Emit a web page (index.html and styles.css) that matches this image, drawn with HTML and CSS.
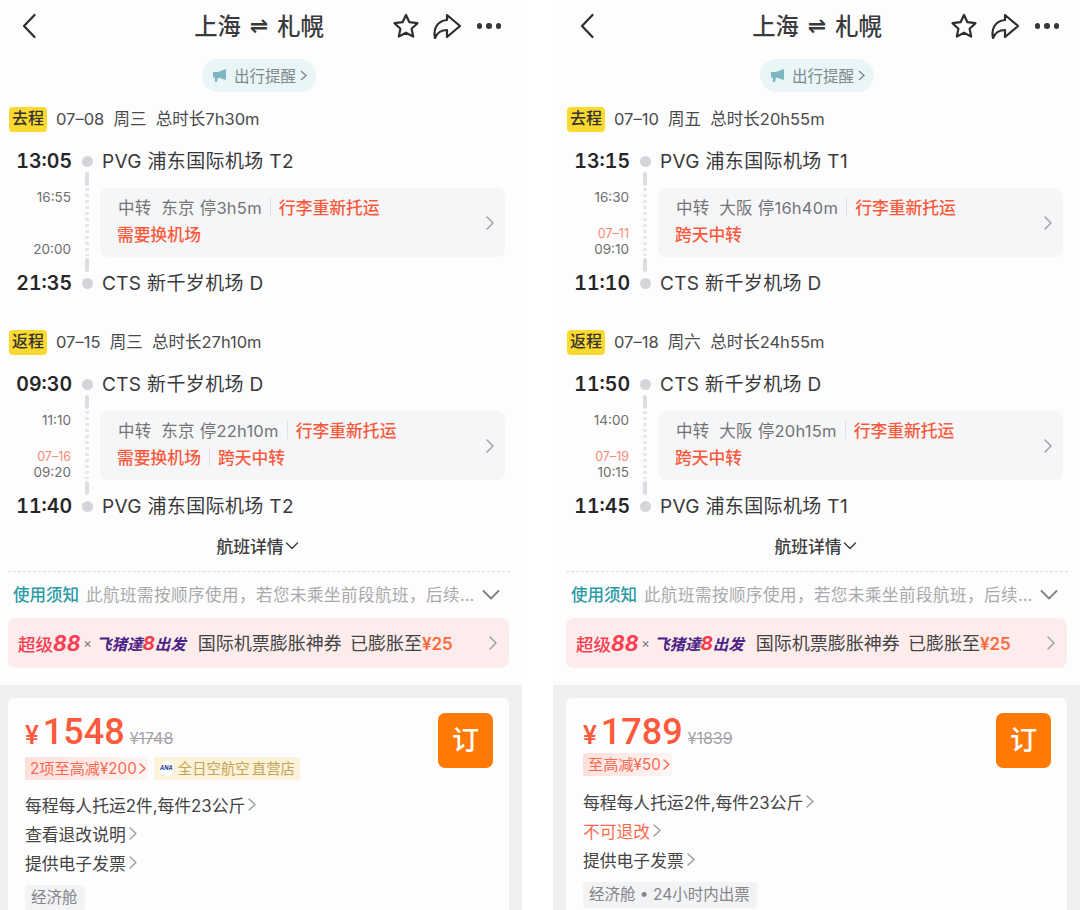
FILE: index.html
```html
<!DOCTYPE html>
<html lang="zh">
<head>
  <meta charset="UTF-8" />
  <title>上海 ⇌ 札幌</title>
  <link rel="stylesheet" href="styles.css">
</head>
<body>
  <div class="page">

    <!-- left phone -->
    <section class="phone phone-left">
      <header class="topbar">
        <svg class="back" width="14" height="26" viewBox="0 0 14 26"><path d="M12.5 2 L2 13 L12.5 24" /></svg>
        <h1 class="title">上海<span class="swap">⇌</span>札幌</h1>
        <div class="actions">
          <svg width="28" height="26" viewBox="0 0 28 26"><path d="M14 2 L17.4 9.2 L25.5 10.2 L19.6 15.7 L21.2 23.6 L14 19.7 L6.8 23.6 L8.4 15.7 L2.5 10.2 L10.6 9.2 Z" /></svg>
          <svg width="30" height="26" viewBox="0 0 30 26"><path d="M15 2 L28 13 L15 24 V17 C9 17 5 20 3 25 C1 16 5 8 15 7 Z" /></svg>
          <div class="dots"><i></i><i></i><i></i></div>
        </div>
      </header>
      <div class="notice-row">
        <div class="notice">
          <svg width="16" height="15" viewBox="0 0 16 15"><path class="horn" d="M1 4 L6 4 L14 1 V12 L6 9.5 L5 14 L3 14 L2.6 9.5 L1 9.5 Z" /></svg>
          <span>出行提醒</span><svg class="mini" width="7" height="11" viewBox="0 0 7 11"><path d="M1 1 L6 5.5 L1 10" /></svg>
        </div>
      </div>

      <div class="leg">
        <div class="leg-head"><span class="leg-tag">去程</span><span class="leg-info">07–08&nbsp; 周三&nbsp; 总时长7h30m</span></div>
        <div class="stop"><span class="time">13:05</span><i class="dot"></i><span class="airport">PVG 浦东国际机场 T2</span></div>
        <div class="transfer">
          <div class="times"><span>16:55</span><span>20:00</span></div>
          <div class="line"><i></i><em></em><i></i></div>
          <div class="box">
            <div class="box-text">
              <p><span class="grey">中转&nbsp; 东京 停3h5m</span><span class="sep"></span><span class="red">行李重新托运</span></p>
              <p><span class="red">需要换机场</span></p>
            </div>
            <svg class="chev" width="8" height="14" viewBox="0 0 8 14"><path d="M1 1 L7 7 L1 13" /></svg>
          </div>
        </div>
        <div class="stop"><span class="time">21:35</span><i class="dot"></i><span class="airport">CTS 新千岁机场 D</span></div>
      </div>

      <div class="leg">
        <div class="leg-head"><span class="leg-tag">返程</span><span class="leg-info">07–15&nbsp; 周三&nbsp; 总时长27h10m</span></div>
        <div class="stop"><span class="time">09:30</span><i class="dot"></i><span class="airport">CTS 新千岁机场 D</span></div>
        <div class="transfer">
          <div class="times"><span>11:10</span><span><small>07–16</small>09:20</span></div>
          <div class="line"><i></i><em></em><i></i></div>
          <div class="box">
            <div class="box-text">
              <p><span class="grey">中转&nbsp; 东京 停22h10m</span><span class="sep"></span><span class="red">行李重新托运</span></p>
              <p><span class="red">需要换机场</span><span class="sep"></span><span class="red">跨天中转</span></p>
            </div>
            <svg class="chev" width="8" height="14" viewBox="0 0 8 14"><path d="M1 1 L7 7 L1 13" /></svg>
          </div>
        </div>
        <div class="stop"><span class="time">11:40</span><i class="dot"></i><span class="airport">PVG 浦东国际机场 T2</span></div>
      </div>

      <div class="details">航班详情<svg width="14" height="8" viewBox="0 0 14 8"><path d="M1.5 1 L7 6.5 L12.5 1" /></svg></div>
      <div class="rules">
        <span class="rules-name">使用须知</span>
        <span class="rules-text">此航班需按顺序使用，若您未乘坐前段航班，后续…</span>
        <svg width="18" height="10" viewBox="0 0 18 10"><path d="M1.5 1 L9 8.5 L16.5 1" /></svg>
      </div>
      <div class="promo">
        <span class="promo-red">超级<b>88</b></span><span class="promo-x">×</span><span class="promo-purple">飞猪達<u>8</u>出发</span>
        <span class="promo-text">国际机票膨胀神券 已膨胀至<b>¥25</b></span>
        <svg class="chev" width="8" height="14" viewBox="0 0 8 14"><path d="M1 1 L7 7 L1 13" /></svg>
      </div>

      <div class="band">
        <div class="card">
          <div class="price-row"><span class="yen">¥</span><span class="price">1548</span><s class="old">¥1748</s></div>
          <div class="tags">
            <span class="tag-off">2项至高减¥200<svg width="7" height="11" viewBox="0 0 7 11"><path d="M1 1 L6 5.5 L1 10" /></svg></span>
            <span class="tag-shop"><i class="ana">ANA</i>全日空航空 直营店</span>
          </div>
          <ul class="terms">
            <li>每程每人托运2件,每件23公斤<svg width="8" height="13" viewBox="0 0 8 13"><path d="M1 1 L7 6.5 L1 12" /></svg></li>
            <li>查看退改说明<svg width="8" height="13" viewBox="0 0 8 13"><path d="M1 1 L7 6.5 L1 12" /></svg></li>
            <li>提供电子发票<svg width="8" height="13" viewBox="0 0 8 13"><path d="M1 1 L7 6.5 L1 12" /></svg></li>
          </ul>
          <span class="cabin">经济舱</span>
          <div class="book">订</div>
        </div>
      </div>
    </section>

    <!-- right phone -->
    <section class="phone phone-right">
      <header class="topbar">
        <svg class="back" width="14" height="26" viewBox="0 0 14 26"><path d="M12.5 2 L2 13 L12.5 24" /></svg>
        <h1 class="title">上海<span class="swap">⇌</span>札幌</h1>
        <div class="actions">
          <svg width="28" height="26" viewBox="0 0 28 26"><path d="M14 2 L17.4 9.2 L25.5 10.2 L19.6 15.7 L21.2 23.6 L14 19.7 L6.8 23.6 L8.4 15.7 L2.5 10.2 L10.6 9.2 Z" /></svg>
          <svg width="30" height="26" viewBox="0 0 30 26"><path d="M15 2 L28 13 L15 24 V17 C9 17 5 20 3 25 C1 16 5 8 15 7 Z" /></svg>
          <div class="dots"><i></i><i></i><i></i></div>
        </div>
      </header>
      <div class="notice-row">
        <div class="notice">
          <svg width="16" height="15" viewBox="0 0 16 15"><path class="horn" d="M1 4 L6 4 L14 1 V12 L6 9.5 L5 14 L3 14 L2.6 9.5 L1 9.5 Z" /></svg>
          <span>出行提醒</span><svg class="mini" width="7" height="11" viewBox="0 0 7 11"><path d="M1 1 L6 5.5 L1 10" /></svg>
        </div>
      </div>

      <div class="leg">
        <div class="leg-head"><span class="leg-tag">去程</span><span class="leg-info">07–10&nbsp; 周五&nbsp; 总时长20h55m</span></div>
        <div class="stop"><span class="time">13:15</span><i class="dot"></i><span class="airport">PVG 浦东国际机场 T1</span></div>
        <div class="transfer">
          <div class="times"><span>16:30</span><span><small>07–11</small>09:10</span></div>
          <div class="line"><i></i><em></em><i></i></div>
          <div class="box">
            <div class="box-text">
              <p><span class="grey">中转&nbsp; 大阪 停16h40m</span><span class="sep"></span><span class="red">行李重新托运</span></p>
              <p><span class="red">跨天中转</span></p>
            </div>
            <svg class="chev" width="8" height="14" viewBox="0 0 8 14"><path d="M1 1 L7 7 L1 13" /></svg>
          </div>
        </div>
        <div class="stop"><span class="time">11:10</span><i class="dot"></i><span class="airport">CTS 新千岁机场 D</span></div>
      </div>

      <div class="leg">
        <div class="leg-head"><span class="leg-tag">返程</span><span class="leg-info">07–18&nbsp; 周六&nbsp; 总时长24h55m</span></div>
        <div class="stop"><span class="time">11:50</span><i class="dot"></i><span class="airport">CTS 新千岁机场 D</span></div>
        <div class="transfer">
          <div class="times"><span>14:00</span><span><small>07–19</small>10:15</span></div>
          <div class="line"><i></i><em></em><i></i></div>
          <div class="box">
            <div class="box-text">
              <p><span class="grey">中转&nbsp; 大阪 停20h15m</span><span class="sep"></span><span class="red">行李重新托运</span></p>
              <p><span class="red">跨天中转</span></p>
            </div>
            <svg class="chev" width="8" height="14" viewBox="0 0 8 14"><path d="M1 1 L7 7 L1 13" /></svg>
          </div>
        </div>
        <div class="stop"><span class="time">11:45</span><i class="dot"></i><span class="airport">PVG 浦东国际机场 T1</span></div>
      </div>

      <div class="details">航班详情<svg width="14" height="8" viewBox="0 0 14 8"><path d="M1.5 1 L7 6.5 L12.5 1" /></svg></div>
      <div class="rules">
        <span class="rules-name">使用须知</span>
        <span class="rules-text">此航班需按顺序使用，若您未乘坐前段航班，后续…</span>
        <svg width="18" height="10" viewBox="0 0 18 10"><path d="M1.5 1 L9 8.5 L16.5 1" /></svg>
      </div>
      <div class="promo">
        <span class="promo-red">超级<b>88</b></span><span class="promo-x">×</span><span class="promo-purple">飞猪達<u>8</u>出发</span>
        <span class="promo-text">国际机票膨胀神券 已膨胀至<b>¥25</b></span>
        <svg class="chev" width="8" height="14" viewBox="0 0 8 14"><path d="M1 1 L7 7 L1 13" /></svg>
      </div>

      <div class="band">
        <div class="card card-short">
          <div class="price-row"><span class="yen">¥</span><span class="price">1789</span><s class="old">¥1839</s></div>
          <div class="tags">
            <span class="tag-off">至高减¥50<svg width="7" height="11" viewBox="0 0 7 11"><path d="M1 1 L6 5.5 L1 10" /></svg></span>
          </div>
          <ul class="terms">
            <li>每程每人托运2件,每件23公斤<svg width="8" height="13" viewBox="0 0 8 13"><path d="M1 1 L7 6.5 L1 12" /></svg></li>
            <li class="warn">不可退改<svg width="8" height="13" viewBox="0 0 8 13"><path d="M1 1 L7 6.5 L1 12" /></svg></li>
            <li>提供电子发票<svg width="8" height="13" viewBox="0 0 8 13"><path d="M1 1 L7 6.5 L1 12" /></svg></li>
          </ul>
          <span class="cabin">经济舱 • 24小时内出票</span>
          <div class="book">订</div>
        </div>
      </div>
    </section>

  </div>
</body>
</html>
```

FILE: styles.css
```css
* {
  box-sizing: border-box;
}
html, body {
  margin: 0;
  height: 910px;
  overflow: hidden;
  background: #fff;
}
body {
  font-family: Inter, "Noto Sans CJK SC", sans-serif;
  color: #333;
}
.page {
  display: flex;
  justify-content: space-between;
  width: 1080px;
  height: 910px;
}
.phone {
  width: 522px;
  height: 910px;
  overflow: hidden;
  background: #fdfdfd;
}
.phone-right {
  width: 527px;
  padding-left: 5px;
}
.phone-right .band {
  margin-left: -5px;
  padding-left: 13px;
}

/* header */
.topbar {
  display: flex;
  align-items: center;
  justify-content: space-between;
  height: 52px;
  padding: 0 21px 0 22px;
  position: relative;
}
.topbar svg path {
  fill: none;
  stroke: #2d2d2f;
  stroke-width: 2.2;
  stroke-linejoin: round;
  stroke-linecap: round;
}
.title {
  position: absolute;
  left: 0;
  right: 4px;
  top: 9px;
  margin: 0;
  display: flex;
  justify-content: center;
  align-items: center;
  height: 32px;
  font-size: 23.3px;
  font-weight: 500;
  color: #3a3a3c;
}
.swap {
  font-family: "DejaVu Sans", sans-serif;
  font-size: 22px;
  font-weight: 700;
  margin: 0 9px;
}
.actions {
  display: flex;
  align-items: center;
  gap: 12px;
  position: relative;
}
.dots {
  display: flex;
  gap: 4px;
  margin-left: 3px;
}
.dots i {
  width: 5.5px;
  height: 5.5px;
  border-radius: 50%;
  background: #38383a;
}
.notice-row {
  display: flex;
  justify-content: center;
  margin: 7px 0 15px;
  padding-right: 4px;
}
.notice {
  display: flex;
  align-items: center;
  gap: 6px;
  width: 114px;
  height: 33px;
  padding: 0 0 0 10px;
  border-radius: 17px;
  background: #e9f5f7;
  color: #7f8a8e;
  font-size: 15.5px;
}
.notice span {
  margin-top: -2px;
}
.horn {
  fill: #7fb6c2;
}
.mini {
  margin-left: -2px;
}
.mini path {
  fill: none;
  stroke: #7f8a8e;
  stroke-width: 1.5;
}

/* flight legs */
.leg {
  margin-bottom: 36px;
}
.leg + .leg {
  margin-bottom: 17px;
}
.leg-head {
  display: flex;
  align-items: center;
  gap: 9px;
  height: 25px;
  padding-left: 9px;
  margin-bottom: 18px;
  font-size: 16.5px;
  color: #4a4a4c;
}
.leg-info {
  margin-top: -3px;
}
.leg-tag {
  width: 38px;
  height: 25px;
  line-height: 23px;
  text-align: center;
  border-radius: 4px;
  background: #fcd92e;
  color: #333;
  font-size: 16px;
  font-weight: 500;
}
.stop {
  display: flex;
  align-items: center;
  height: 22px;
}
.time {
  width: 72px;
  text-align: right;
  font-size: 19.5px;
  font-weight: 600;
  font-variant-numeric: tabular-nums;
  color: #26262a;
}
.dot {
  width: 11px;
  height: 11px;
  margin: 0 9px 0 10px;
  border-radius: 50%;
  background: #d3d5db;
}
.airport {
  margin-top: -3px;
  font-size: 19px;
  letter-spacing: 0.35px;
  color: #39393c;
}
.transfer {
  display: flex;
  height: 100px;
}
.times {
  width: 71px;
  padding: 17px 0 15px;
  display: flex;
  flex-direction: column;
  justify-content: space-between;
  align-items: flex-end;
  font-size: 13.5px;
  line-height: 16px;
  color: #6d6d70;
}
.times span {
  display: flex;
  flex-direction: column;
  align-items: flex-end;
}
.times small {
  font-size: 12.5px;
  line-height: 14px;
  color: #fa8a78;
}
.line {
  width: 4px;
  margin: 0 11px 0 14px;
  display: flex;
  flex-direction: column;
}
.line i {
  height: 14px;
  border-radius: 2px;
  background: #dcdde2;
}
.line em {
  flex: 1;
  margin: 2px 0;
  background: repeating-linear-gradient(#e6e7ea 0 3px, transparent 3px 6px);
}
.box {
  display: flex;
  align-items: center;
  justify-content: space-between;
  width: 405px;
  height: 69px;
  margin-top: 16px;
  padding: 0 11px 0 17px;
  border-radius: 8px;
  background: #f5f6f8;
}
.box-text {
  padding-bottom: 4px;
}
.box p {
  display: flex;
  align-items: center;
  height: 27.5px;
  margin: 0;
  font-size: 16.8px;
}
.grey {
  color: #737377;
  font-size: 16.5px;
  letter-spacing: 0.25px;
  padding-left: 1px;
}
.red {
  color: #fc5a3c;
  font-weight: 500;
}
.sep {
  width: 1px;
  height: 18px;
  margin: 0 8px;
  background: #dfe0e3;
}
.chev path, .details path, .rules path, .tags path, .terms path {
  fill: none;
  stroke: #9c9ca0;
  stroke-width: 1.4;
  stroke-linecap: round;
  stroke-linejoin: round;
}

/* details, rules, promo */
.details {
  display: flex;
  justify-content: center;
  align-items: center;
  gap: 1px;
  height: 24px;
  padding-right: 7px;
  font-size: 16.8px;
  font-weight: 500;
  color: #3d3d40;
}
.details path {
  stroke: #3d3d40;
}
.rules {
  display: flex;
  align-items: center;
  height: 47px;
  margin: 13px 12px 0 8px;
  border-top: 1px dashed #dcdde0;
  padding: 0 10px 0 5px;
  font-size: 16.5px;
}
.rules-name {
  margin-top: -3px;
  color: #2a9aa6;
  font-weight: 500;
}
.rules-text {
  flex: 1;
  margin: -3px 0 0 7px;
  color: #a9a9ad;
  letter-spacing: 0.5px;
  white-space: nowrap;
}
.rules path {
  stroke: #808084;
  stroke-width: 1.8;
}
.promo {
  display: flex;
  align-items: center;
  width: 501px;
  height: 50px;
  margin: 0 0 17px 8px;
  padding: 0 12px 0 10px;
  border-radius: 8px;
  background: #fcecec;
  white-space: nowrap;
}
.promo-red {
  color: #fa3d52;
  font-size: 17.5px;
  font-weight: 500;
}
.promo-red b {
  font-size: 21px;
  font-weight: 700;
  font-style: italic;
}
.promo-purple {
  color: #4b2285;
  font-size: 15.5px;
  font-weight: 700;
  font-style: italic;
}
.promo-x {
  margin: 0 4px 0 3px;
  color: #777;
  font-size: 13px;
}
.promo-purple u {
  color: #f53a4a;
  font-size: 19px;
  text-decoration: none;
}
.promo-text {
  flex: 1;
  margin: -3px 0 0 12px;
  font-size: 18px;
  word-spacing: 3px;
  color: #444;
}
.promo-text b {
  color: #fb6a3c;
  font-size: 17px;
  font-weight: 600;
}

/* price card */
.band {
  height: 225px;
  padding: 13px 13px 0 8px;
  background: #eff0f2;
}
.card {
  position: relative;
  height: 230px;
  padding: 12px 17px;
  border-radius: 6px;
  background: #fdfdfd;
}
.price-row {
  display: flex;
  align-items: baseline;
  height: 44px;
  color: #fc5a3c;
}
.yen {
  font-family: Roboto, sans-serif;
  font-size: 26px;
  font-weight: 500;
  margin-right: 4px;
}
.price {
  font-family: Roboto, sans-serif;
  font-size: 36px;
  font-weight: 500;
  line-height: 44px;
}
.old {
  margin-left: 5px;
  font-size: 16px;
  color: #a3a3a7;
}
.tags {
  display: flex;
  gap: 6px;
  height: 23px;
  margin-top: 3px;
  font-size: 15.2px;
  line-height: 23px;
}
.card-short .tags {
  margin-top: -1px;
}
.tag-off {
  display: flex;
  align-items: center;
  gap: 2px;
  padding: 0 2px 0 5px;
  border-radius: 2px;
  background: linear-gradient(90deg, #fde0dc, #fdf5f4);
  color: #fa6a50;
}
.tag-off path {
  stroke: #fa6a50;
}
.tag-shop {
  display: flex;
  align-items: center;
  gap: 4px;
  padding: 0 5px;
  border-radius: 3px;
  background: #fbf2d9;
  color: #c3a557;
  font-size: 14.4px;
  word-spacing: -2px;
}
.ana {
  width: 15px;
  height: 15px;
  border-radius: 50%;
  background: #fff;
  color: #23408f;
  font-size: 5.5px;
  font-weight: 700;
  line-height: 15px;
  text-align: center;
}
.terms {
  list-style: none;
  margin: 10px 0 0;
  padding: 0;
  font-size: 16.8px;
  color: #444;
}
.card-short .terms {
  margin-top: 11px;
}
.terms li {
  display: flex;
  align-items: center;
  gap: 3px;
  height: 29px;
}
.terms .warn {
  color: #fb6a50;
}
.cabin {
  display: inline-block;
  height: 26px;
  margin-top: 8px;
  padding: 0 7px 0 6px;
  border-radius: 4px;
  background: #f2f3f5;
  color: #858589;
  font-size: 15.5px;
  line-height: 25px;
}
.book {
  position: absolute;
  top: 15px;
  right: 16px;
  width: 55px;
  height: 55px;
  border-radius: 7px;
  background: #ff7a05;
  color: #fff;
  font-size: 27px;
  font-weight: 500;
  line-height: 56px;
  text-align: center;
}
```
